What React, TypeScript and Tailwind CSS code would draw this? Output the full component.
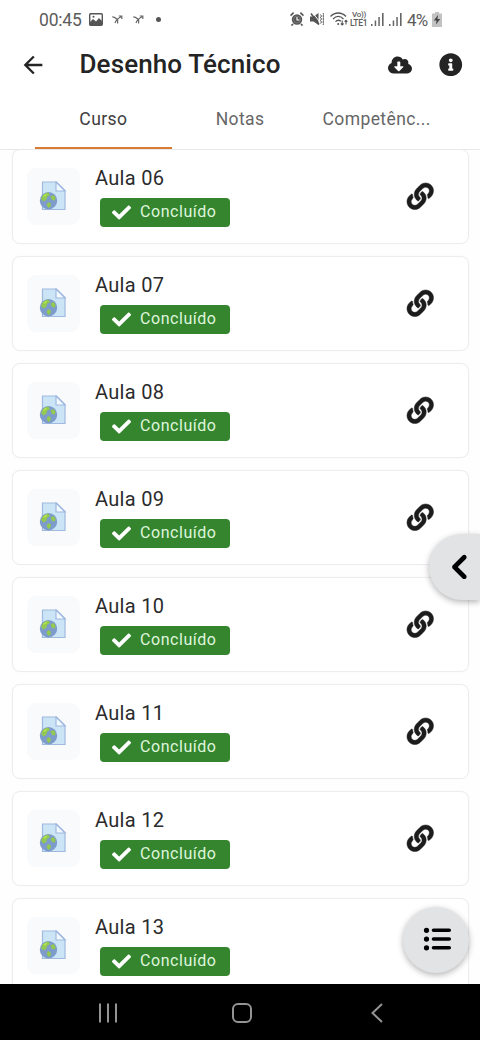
import { FaCheck, FaCloudDownloadAlt, FaInfoCircle, FaLink } from "react-icons/fa";
import { FaChevronLeft, FaListUl } from "react-icons/fa6";
import { MdArrowBack } from "react-icons/md";

type Lesson = {
  id: number;
  title: string;
};

const lessons: Lesson[] = [
  { id: 6, title: "Aula 06" },
  { id: 7, title: "Aula 07" },
  { id: 8, title: "Aula 08" },
  { id: 9, title: "Aula 09" },
  { id: 10, title: "Aula 10" },
  { id: 11, title: "Aula 11" },
  { id: 12, title: "Aula 12" },
  { id: 13, title: "Aula 13" },
];

const tabs = ["Curso", "Notas", "Competênc..."];

function ForkIcon({ className }: { className: string }) {
  return (
    <svg viewBox="0 0 11 9" className={`h-[9px] w-[11px] ${className}`} fill="none" stroke="#666" strokeWidth="1.2">
      <path d="M.3 1.8C2.8 1.8 3.8 3.2 5.6 4.8V8.5M3 8C3.8 5.5 6 3.5 9 1.8M6.8 1h3v3" />
    </svg>
  );
}

function SignalIcon({ className }: { className: string }) {
  return (
    <svg viewBox="0 0 13 13" className={`h-[13px] w-[13px] ${className}`} fill="#666">
      <path d="M0 11h1.5v2H0zM3.7 7.5h1.5V13H3.7zM7.3 4h1.5v9H7.3zM11 0h1.6v13H11z" />
    </svg>
  );
}

function StatusBar() {
  return (
    <div className="flex h-[38px] shrink-0 items-center pl-[39px] pr-[38px] text-[#5c5c5c]">
      <span className="w-[44px] whitespace-nowrap pt-[3px] text-[17.5px] leading-none tracking-[-0.2px]">00:45</span>
      <svg viewBox="0 0 14 13" className="ml-[6px] h-[13px] w-[14px]">
        <rect x=".7" y=".7" width="12.6" height="11.6" rx="1" fill="none" stroke="#555" strokeWidth="1.4" />
        <path d="M1 12V9l3-3 3 2.5L10 5l3 3v4z" fill="#555" />
        <circle cx="4.5" cy="3.8" r="1" fill="#555" />
      </svg>
      <ForkIcon className="ml-[9px]" />
      <ForkIcon className="ml-[10px]" />
      <span className="ml-[12px] size-[5px] rounded-full bg-[#555]" />

      <div className="ml-auto flex items-center">
        {/* alarm */}
        <svg viewBox="0 0 14 14" className="h-[14px] w-[14px]">
          <circle cx="7" cy="7.5" r="5.2" fill="#555" />
          <path d="M.5 3.6 3.6.7M13.5 3.6 10.4.7M3 12l-1.5 1.5M11 12l1.5 1.5" stroke="#555" strokeWidth="1.7" />
          <circle cx="7" cy="7.5" r="3.5" fill="none" stroke="#888" strokeWidth=".7" />
          <path d="M7 5v3h2.5" stroke="#fff" fill="none" strokeWidth="1.1" />
        </svg>
        {/* vibrate */}
        <svg viewBox="0 0 14 14" className="ml-[6px] h-[14px] w-[14px]">
          <path d="M0 4.5h3.5L8.5 1v12L3.5 9.5H0z" fill="#555" />
          <path d="M2.5.5 9.5 9.5" stroke="#fff" strokeWidth="1" />
          <path d="M1 1.5 9 12.5" stroke="#555" strokeWidth="1.6" />
          <path d="m10.5 2.5 1 1.5-1 1.5 1 1.5-1 1.5 1 1.5-1 1.5M13 1l.8 1.5L13 4l.8 1.5L13 7l.8 1.5L13 10l.8 1.5L13 13" fill="none" stroke="#555" strokeWidth="1" />
        </svg>
        {/* wifi with traffic arrows */}
        <svg viewBox="0 0 18 14" className="ml-[6px] h-[14px] w-[18px]" fill="none" stroke="#555" strokeWidth="1.3">
          <path d="M.5 4.5C5-.2 11.5-.2 16 4.5M3 7c3.3-3.3 7.2-3.3 10.5 0M5.5 9.6c1.8-1.8 3.6-1.8 5.3-.3" />
          <circle cx="8.2" cy="12" r="1" fill="#555" stroke="none" />
          <path d="M12.2 8.5V13M10.8 11.5l1.4 1.5 1.4-1.5M16 12.5V8M14.6 9.7 16 8.2l1.4 1.5" strokeWidth="1.1" />
        </svg>
        <span className="ml-[2px] flex w-[18px] flex-col whitespace-nowrap font-medium">
          <span className="pl-[2px] text-[8px] leading-[8px] tracking-[-0.3px]">Vo))</span>
          <span className="text-[8.5px] leading-[8px] tracking-[-0.3px]">LTE1</span>
        </span>
        <SignalIcon className="ml-[3px]" />
        <SignalIcon className="ml-[5px]" />
        <span className="ml-[5px] w-[22px] whitespace-nowrap pt-[3px] text-[17px] leading-none tracking-[-0.7px]">4%</span>
        <svg viewBox="0 0 10 15" className="ml-[3px] h-[15px] w-[10px]">
          <path d="M3 0h4v1.5h3V15H0V1.5h3z" fill="#c2c2c2" />
          <path d="M6 3 1.8 8.5h2.7L4 12.5 8.2 7H5.5z" fill="#444" />
        </svg>
      </div>
    </div>
  );
}

// Web page resource: sheet with a folded corner and a globe over it
function ResourceIcon() {
  return (
    <svg viewBox="0 0 28 30" className="mr-px h-[30px] w-[28px]">
      <path d="M3.5 1h14L26 9.5v19H3.5z" fill="#cbe5f6" stroke="#a0b9e0" strokeWidth="1.2" />
      <path d="M17 1v9h9z" fill="#f2f9ff" stroke="#a0b9e0" strokeWidth="1.2" />
      <circle cx="9.5" cy="19.7" r="8.7" fill="#7d9bcb" />
      <path d="M2.2 18c.7-4 4-6.5 7.3-6.3L11 14l-3 2-.7 3-3 1.5zM11.5 15.5l3-1.5 2 2.5-.5 3-3-.5zM9 21l3 1.5-.5 3-2 1.5-2-3z" fill="#93c851" />
      <path d="M4 15.5c1-1.7 2.5-2.6 4-2.7l-1 2.5z" fill="#b5e64e" />
    </svg>
  );
}

function LessonCard({ lesson }: { lesson: Lesson }) {
  return (
    <div className="flex h-[95px] shrink-0 items-start rounded-[8px] border border-[#ededf0] bg-white pl-[14px] pr-[34.5px] shadow-[0_0_2px_rgba(0,0,0,0.04)]">
      <div className="mt-[17.5px] flex h-[57px] w-[53px] items-center justify-center rounded-[9px] bg-[#f9fafc]">
        <ResourceIcon />
      </div>
      <div className="ml-[15px] flex flex-col items-start">
        <p className="mt-[15.5px] text-[20px] leading-[25px] tracking-[0.3px] text-[#2b2b2d]">{lesson.title}</p>
        <div className="ml-[4.5px] mt-[7px] flex h-[29.5px] w-[130px] items-center rounded-[4px] bg-[#35852f] pl-[12px] text-[#dff5dc]">
          <FaCheck className="size-[19px] text-white" />
          <span className="ml-[9.5px] text-[16px] leading-none tracking-[0.55px]">Concluído</span>
        </div>
      </div>
      <FaLink className="ml-auto mt-[33px] size-[26.5px] overflow-visible stroke-[#1c1c1c] stroke-[9px] text-[#1c1c1c]" />
    </div>
  );
}

export default function App() {
  return (
    <div className="relative flex h-[1040px] w-[480px] flex-col overflow-hidden bg-white font-[Roboto,sans-serif]">
      <StatusBar />

      <header className="flex h-[52px] shrink-0 items-center pl-[19px] pr-[17.5px] text-[#242424]">
        <MdArrowBack className="mt-[2px] size-[28px]" />
        <h1 className="ml-[32.5px] text-[26px] font-medium leading-none tracking-[0.12px]">Desenho Técnico</h1>
        <FaCloudDownloadAlt className="ml-auto mt-px size-[24px]" />
        <FaInfoCircle className="ml-[27px] mt-px size-[23.5px]" />
      </header>

      <nav className="z-10 flex h-[60px] shrink-0 border-b border-[#e8e8e8] px-[35px]">
        {tabs.map((tab, i) => (
          <button
            key={tab}
            className={`flex h-[59px] w-[137px] items-center justify-center border-b-[2.5px] pt-[2px] text-[17.5px] tracking-[0.4px] ${
              i === 0 ? "border-[#d97b32] text-[#3d3d3d]" : "border-transparent text-[#666]"
            }`}
          >
            {tab}
          </button>
        ))}
      </nav>

      <main className="-mt-px flex min-h-0 flex-1 flex-col gap-[12px] overflow-hidden bg-[#fefefe] pl-[12px] pr-[11px]">
        {lessons.map((lesson) => (
          <LessonCard key={lesson.id} lesson={lesson} />
        ))}
      </main>

      <button className="absolute right-0 top-[534px] flex h-[66px] w-[51px] items-center rounded-l-full bg-[#e1e3e4] pl-[19px] text-black shadow-[0_2px_6px_rgba(0,0,0,0.3)]">
        <FaChevronLeft className="size-[26px] overflow-visible stroke-black stroke-[28px]" />
      </button>
      <button className="absolute left-[403px] top-[907px] flex size-[66px] items-center justify-center rounded-full bg-[#e1e3e4] pb-[2px] pl-px text-black shadow-[0_2px_6px_rgba(0,0,0,0.3)]">
        <FaListUl className="size-[28px]" />
      </button>

      <footer className="relative flex h-[56px] shrink-0 items-center bg-black pl-[98px] pt-[2px] text-[#949494]">
        <svg viewBox="0 0 20 20" className="h-[20px] w-[20px]" stroke="currentColor" strokeWidth="2">
          <path d="M2 .5v19M10 .5v19M18 .5v19" />
        </svg>
        <svg viewBox="0 0 22 22" className="ml-[113px] size-[22px]" fill="none" stroke="currentColor" strokeWidth="2">
          <rect x="2" y="2" width="18" height="18" rx="5" />
        </svg>
        <svg viewBox="0 0 12 20" className="ml-[118px] h-[20px] w-[12px]" fill="none" stroke="currentColor" strokeWidth="2">
          <path d="M11 1 1.5 10l9.5 9" />
        </svg>
      </footer>
    </div>
  );
}
